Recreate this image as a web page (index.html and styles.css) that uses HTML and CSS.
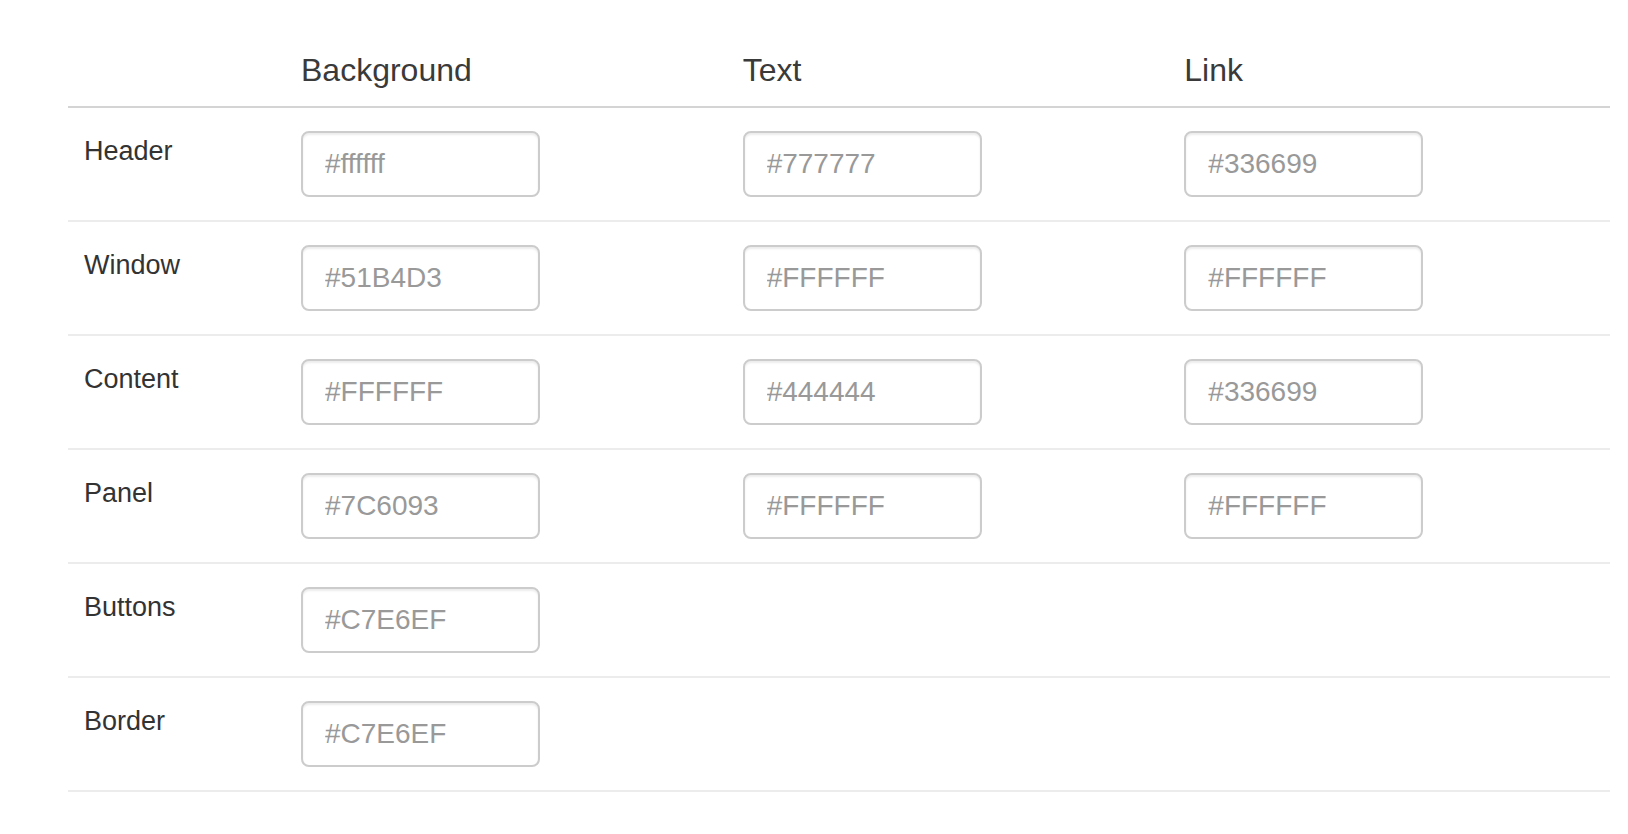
FILE: index.html
```html
<!DOCTYPE html>
<html>
<head>
<meta charset="utf-8">
<link rel="stylesheet" href="styles.css">
</head>
<body>
<table class="colors">
  <colgroup>
    <col class="c-label">
    <col class="c-field">
    <col class="c-field">
    <col class="c-field">
  </colgroup>
  <thead>
    <tr>
      <th></th>
      <th>Background</th>
      <th>Text</th>
      <th>Link</th>
    </tr>
  </thead>
  <tbody>
    <tr>
      <td class="label">Header</td>
      <td><input class="field" type="text" placeholder="#ffffff"></td>
      <td><input class="field" type="text" placeholder="#777777"></td>
      <td><input class="field" type="text" placeholder="#336699"></td>
    </tr>
    <tr>
      <td class="label">Window</td>
      <td><input class="field" type="text" placeholder="#51B4D3"></td>
      <td><input class="field" type="text" placeholder="#FFFFFF"></td>
      <td><input class="field" type="text" placeholder="#FFFFFF"></td>
    </tr>
    <tr>
      <td class="label">Content</td>
      <td><input class="field" type="text" placeholder="#FFFFFF"></td>
      <td><input class="field" type="text" placeholder="#444444"></td>
      <td><input class="field" type="text" placeholder="#336699"></td>
    </tr>
    <tr>
      <td class="label">Panel</td>
      <td><input class="field" type="text" placeholder="#7C6093"></td>
      <td><input class="field" type="text" placeholder="#FFFFFF"></td>
      <td><input class="field" type="text" placeholder="#FFFFFF"></td>
    </tr>
    <tr>
      <td class="label">Buttons</td>
      <td><input class="field" type="text" placeholder="#C7E6EF"></td>
      <td></td>
      <td></td>
    </tr>
    <tr>
      <td class="label">Border</td>
      <td><input class="field" type="text" placeholder="#C7E6EF"></td>
      <td></td>
      <td></td>
    </tr>
  </tbody>
</table>
</body>
</html>
```

FILE: styles.css
```css
html, body {
  margin: 0;
  padding: 0;
  background: #ffffff;
}

body {
  font-family: "Liberation Sans", Arial, Helvetica, sans-serif;
  color: #333333;
}

.colors {
  margin: 34px 0 0 68px;
  width: 1542px;
  table-layout: fixed;
  border-collapse: collapse;
  border-spacing: 0;
}

.c-label {
  width: 217px;
}

.c-field {
  width: 441.67px;
}

.colors th {
  text-align: left;
  font-weight: normal;
  font-size: 32px;
  line-height: 40px;
  padding: 16px 16px;
  color: #3a3a3a;
  border-bottom: 2px solid #d4d4d4;
}

.colors td {
  vertical-align: top;
  padding: 23px 16px;
  border-bottom: 2px solid #ececec;
}

.colors td.label {
  padding-top: 25px;
  font-size: 27px;
  line-height: 37px;
  color: #333333;
}

.field {
  display: block;
  box-sizing: border-box;
  width: 239px;
  height: 66px;
  margin: 0;
  padding: 0 22px;
  font-family: "Liberation Sans", Arial, Helvetica, sans-serif;
  font-size: 28px;
  color: #555555;
  background: #ffffff;
  border: 2px solid #cccccc;
  border-radius: 8px;
  box-shadow: inset 0 2px 2px rgba(0, 0, 0, 0.075);
  outline: none;
}

.field::placeholder {
  color: #999999;
  opacity: 1;
}
```
